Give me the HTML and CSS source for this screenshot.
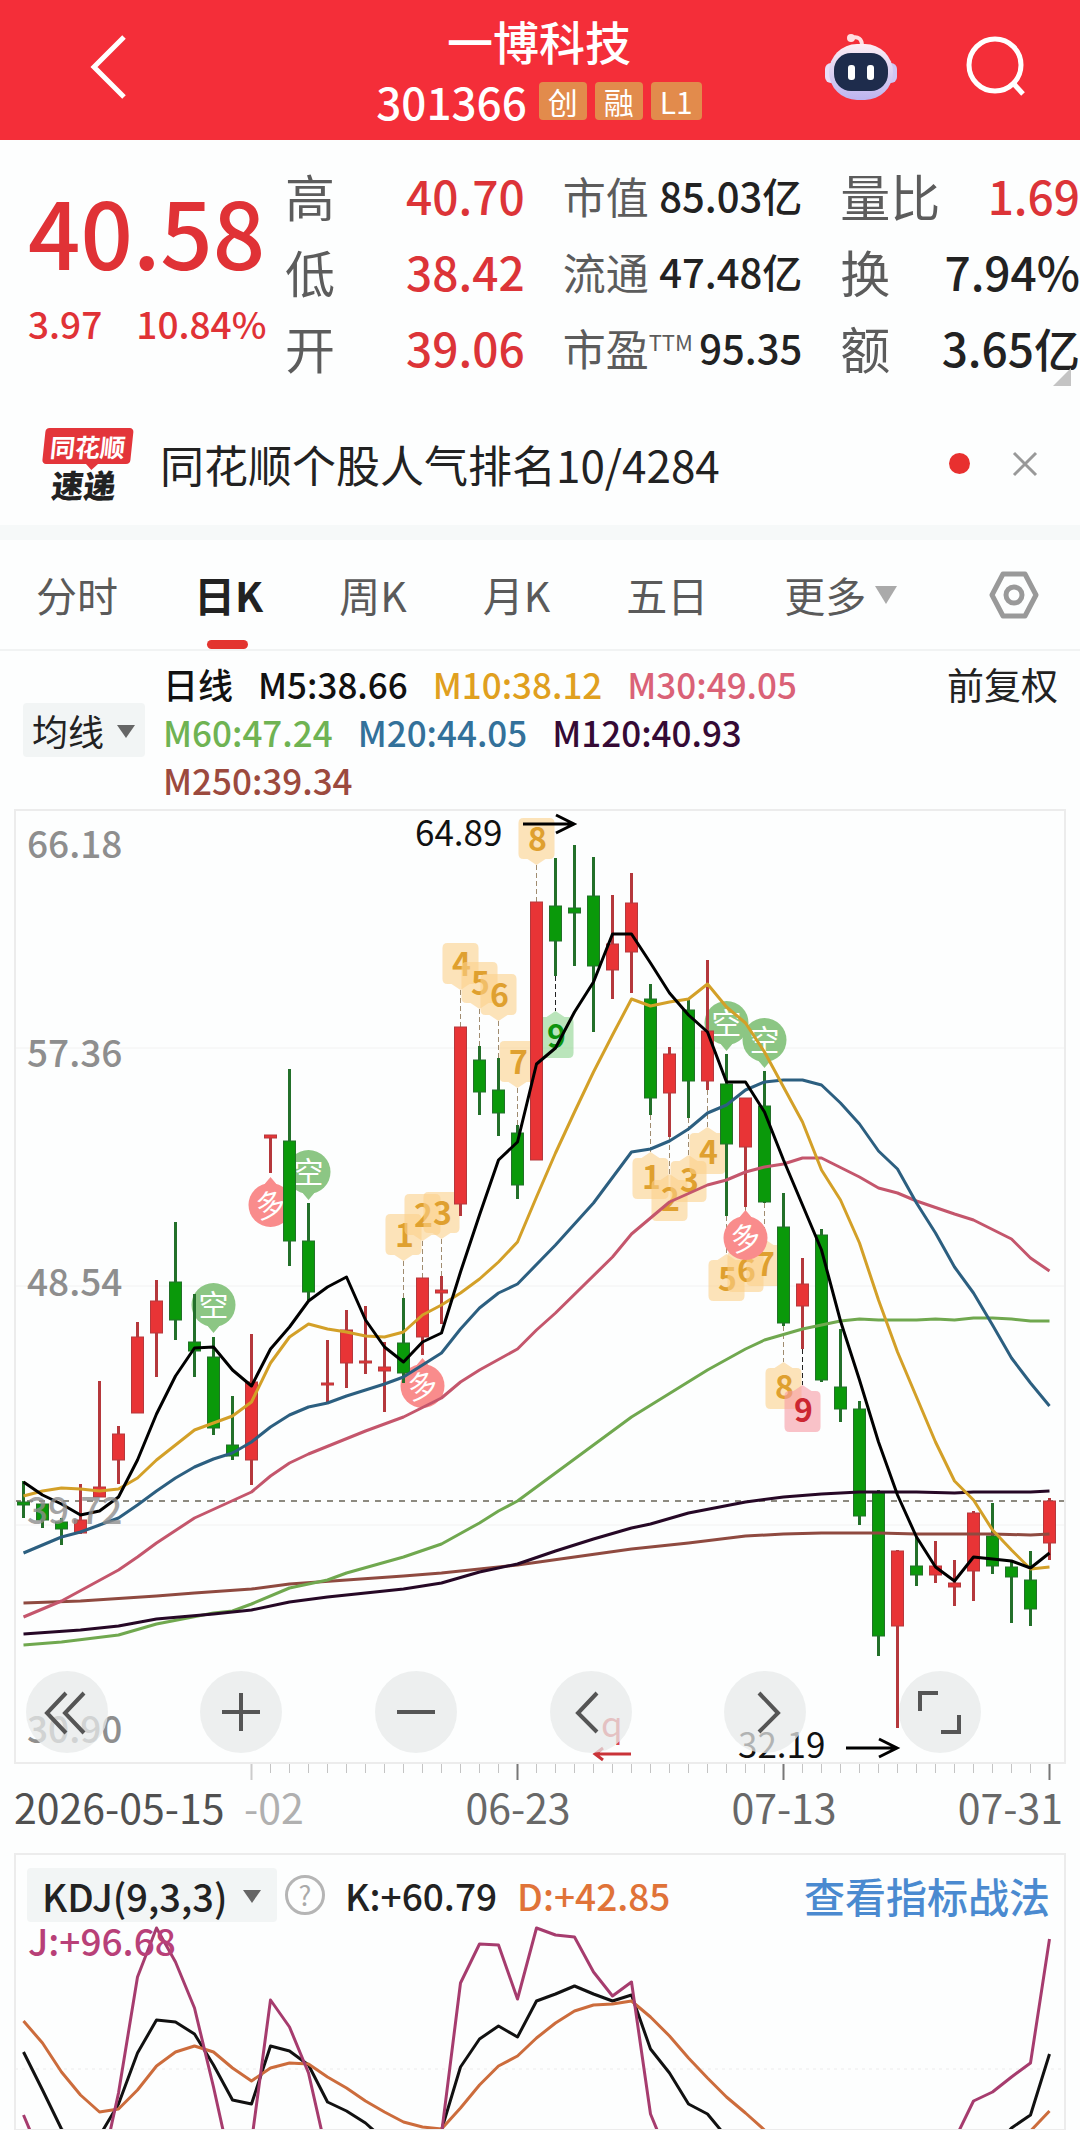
FILE: index.html
```html
<!DOCTYPE html>
<html lang="zh-CN">
<head>
    <meta charset="utf-8" />
    <meta name="viewport" content="width=device-width, initial-scale=1" />
    <title>一博科技 301366</title>
    <link rel="stylesheet" href="styles.css">
    <script src="chart.js" defer></script>
</head>
<body>
    <header class="topbar">
        <button class="iconbtn back" aria-label="返回">
            <svg width="40" height="66" viewBox="0 0 40 66"><path d="M36 3 L6 33 L36 63" /></svg>
        </button>
        <div class="stock">
            <h1>一博科技</h1>
            <div class="code">
                <span>301366</span>
                <span class="badge">创</span>
                <span class="badge">融</span>
                <span class="badge">L1</span>
            </div>
        </div>
        <button class="iconbtn robot" aria-label="助手">
            <svg width="74" height="70" viewBox="0 0 74 70">
                <defs>
                    <linearGradient id="shell" x1="0" y1="0" x2="0" y2="1">
                        <stop offset="0" stop-color="#fdeef4" />
                        <stop offset="1" stop-color="#bcb4f0" />
                    </linearGradient>
                </defs>
                <path class="antenna" d="M27 6 Q38 3 38 14" />
                <circle cx="27" cy="6" r="4" fill="#ffdfe2" />
                <rect x="1" y="31" width="14" height="20" rx="6" fill="#e9def8" />
                <rect x="59" y="31" width="14" height="20" rx="6" fill="#cfc6f3" />
                <rect x="5" y="12" width="64" height="56" rx="28" fill="url(#shell)" />
                <rect x="10" y="21" width="54" height="38" rx="17" fill="#1e2c4c" />
                <rect x="24" y="33" width="7" height="15" rx="3" fill="#fff" />
                <rect x="43" y="33" width="7" height="15" rx="3" fill="#fff" />
            </svg>
        </button>
        <button class="iconbtn search" aria-label="搜索">
            <svg width="64" height="64" viewBox="0 0 64 64"><circle cx="31" cy="30" r="26" /><path d="M49 48 L59 59" /></svg>
        </button>
    </header>

    <section class="quote">
        <div class="price">
            <div class="last">40.58</div>
            <div class="change"><span>3.97</span><span>10.84%</span></div>
        </div>
        <dl class="stats">
            <div><dt>高</dt><dd class="up">40.70</dd></div>
            <div class="small"><dt>市值</dt><dd>85.03亿</dd></div>
            <div><dt>量比</dt><dd class="up">1.69</dd></div>
            <div><dt>低</dt><dd class="up">38.42</dd></div>
            <div class="small"><dt>流通</dt><dd>47.48亿</dd></div>
            <div><dt>换</dt><dd>7.94%</dd></div>
            <div><dt>开</dt><dd class="up">39.06</dd></div>
            <div class="small"><dt>市盈<sup>TTM</sup></dt><dd>95.35</dd></div>
            <div><dt>额</dt><dd>3.65亿</dd></div>
        </dl>
        <span class="corner"></span>
    </section>

    <section class="notice">
        <div class="brand"><b>同花顺</b><i>速递</i></div>
        <a href="#">同花顺个股人气排名10/4284</a>
        <span class="dot"></span>
        <button class="close" aria-label="关闭">
            <svg width="26" height="26" viewBox="0 0 26 26"><path d="M2 2 L24 24 M24 2 L2 24" /></svg>
        </button>
    </section>

    <nav class="tabs">
        <button>分时</button>
        <button class="active">日K</button>
        <button>周K</button>
        <button>月K</button>
        <button>五日</button>
        <button class="more">更多</button>
        <button class="setting" aria-label="设置">
            <svg width="50" height="48" viewBox="0 0 50 48"><path d="M14 3 H36 L47 24 L36 45 H14 L3 24 Z" /><circle cx="25" cy="24" r="8" /></svg>
        </button>
    </nav>

    <section class="legend">
        <div class="picker">
            <select aria-label="均线">
                <option>均线</option>
            </select>
        </div>
        <div class="averages">
            <span class="day">日线</span>
            <span class="m5">M5:38.66</span>
            <span class="m10">M10:38.12</span>
            <span class="m30">M30:49.05</span>
            <span class="m60">M60:47.24</span>
            <span class="m20">M20:44.05</span>
            <span class="m120">M120:40.93</span>
            <span class="m250">M250:39.34</span>
        </div>
        <button class="adjust">前复权</button>
    </section>

    <section class="kline">
        <svg id="kchart" viewBox="15 810 1050 953"></svg>
        <div class="controls">
            <button aria-label="最早"><svg viewBox="0 0 82 82"><path d="M40 22 L21 42 L40 62 M58 22 L39 42 L58 62" /></svg></button>
            <button aria-label="放大"><svg viewBox="0 0 82 82"><path d="M41 22 V60 M22 41 H60" /></svg></button>
            <button aria-label="缩小"><svg viewBox="0 0 82 82"><path d="M22 41 H60" /></svg></button>
            <button aria-label="向前"><svg viewBox="0 0 82 82"><path d="M47 22 L28 42 L47 61" /></svg></button>
            <button aria-label="向后"><svg viewBox="0 0 82 82"><path d="M35 22 L54 42 L35 61" /></svg></button>
            <button aria-label="全屏"><svg viewBox="0 0 82 82"><path d="M21 40 V22 H39 M60 44 V61 H42" /></svg></button>
        </div>
    </section>
    <svg id="timeaxis" viewBox="0 0 1080 91"></svg>

    <section class="kdj">
        <div class="kdjhead">
            <div class="picker">
                <select aria-label="指标">
                    <option>KDJ(9,3,3)</option>
                </select>
            </div>
            <button class="help" aria-label="说明">?</button>
            <span class="k">K:+60.79</span>
            <span class="d">D:+42.85</span>
            <a href="#">查看指标战法</a>
        </div>
        <div class="j">J:+96.68</div>
        <svg id="kdjchart" viewBox="15 1854 1050 276"></svg>
    </section>
</body>
</html>
```
FILE: styles.css
```css
*{
    padding:0;
    margin:0;
    box-sizing:border-box;
}
body{
    font-family:"Noto Sans CJK SC", "Roboto", sans-serif;
    background-color:#fdfefe;
    color:#222;
    overflow-x:hidden;
}
button, select{
    font-family:inherit;
    border:none;
    background:none;
    color:inherit;
}
a{
    text-decoration:none;
    color:inherit;
}
svg{
    display:block;
    fill:none;
}

/* top bar */
.topbar{
    display:flex;
    align-items:center;
    height:140px;
    padding:0 52px 6px 88px;
    background-color:#f42e39;
    color:#fff;
}
.iconbtn svg{
    stroke:#fff;
    stroke-width:5;
}
.robot{
    margin-right:66px;
}
.robot svg{
    stroke:none;
}
.robot .antenna{
    stroke:#ffdfe2;
    stroke-width:4;
}
.stock{
    flex-grow:1;
    margin-left:126px;
    padding-top:2px;
    text-align:center;
}
.stock h1{
    font-size:46px;
    font-weight:500;
    line-height:66px;
}
.code{
    display:flex;
    justify-content:center;
    align-items:center;
    gap:8px;
    font-size:44px;
    font-weight:500;
    line-height:56px;
}
.code span:first-child{
    margin-right:4px;
}
.badge{
    padding:0 9px;
    border-radius:4px;
    background-color:#e28b4c;
    font-size:30px;
    font-weight:400;
    line-height:38px;
}

/* quote */
.quote{
    position:relative;
    display:flex;
    padding:17px 0 1px 28px;
}
.price{
    flex:0 0 257px;
    color:#e03236;
    white-space:nowrap;
}
.last{
    font-size:92px;
    font-weight:500;
    line-height:120px;
    padding-top:13px;
}
.change{
    display:flex;
    gap:34px;
    padding-top:3px;
    font-size:37px;
    font-weight:500;
    line-height:60px;
}
.stats{
    flex-grow:1;
    display:grid;
    grid-template-columns:repeat(3, 1fr);
    column-gap:38px;
}
.stats div{
    display:flex;
    justify-content:space-between;
    line-height:76px;
    font-size:46px;
    white-space:nowrap;
}
.stats dt{
    color:#5c5c5c;
    font-size:50px;
}
.stats dd{
    font-weight:500;
}
.stats .small{
    font-size:40px;
}
.stats .small dt{
    font-size:43px;
}
.stats sup{
    font-size:22px;
    line-height:0;
    vertical-align:15px;
}
.stats .up{
    color:#dc3438;
}
.corner{
    position:absolute;
    right:9px;
    bottom:0;
    border-left:18px solid transparent;
    border-bottom:18px solid #c4c4c4;
}

/* notice */
.notice{
    display:flex;
    align-items:center;
    height:154px;
    padding:16px 42px 0;
    border-bottom:15px solid #f6f9f9;
}
.brand{
    width:88px;
    margin-right:30px;
    text-align:center;
    line-height:36px;
    transform:skewX(-6deg);
}
.brand b{
    position:relative;
    display:block;
    margin-bottom:4px;
    border-radius:4px;
    background-color:#e3353a;
    color:#fff;
    font-size:25px;
}
.brand b::after{
    content:"";
    position:absolute;
    left:50%;
    top:100%;
    border:6px solid transparent;
    border-top-color:#e3353a;
    border-bottom:0;
}
.brand i{
    display:block;
    font-size:32px;
    font-style:normal;
    font-weight:900;
    line-height:32px;
}
.notice a{
    flex-grow:1;
    font-size:44px;
}
.dot{
    width:21px;
    height:21px;
    border-radius:50%;
    background-color:#e8302f;
}
.close{
    margin-left:42px;
}
.close svg{
    stroke:#999;
    stroke-width:3;
}

/* tabs */
.tabs{
    display:flex;
    align-items:center;
    gap:76px;
    height:111px;
    padding:0 41px 0 36px;
    border-bottom:2px solid #f1f3f3;
}
.tabs button{
    position:relative;
    font-size:41px;
    line-height:109px;
    color:#5a5a5a;
    white-space:nowrap;
}
.tabs .active{
    color:#222;
    font-weight:700;
}
.tabs .active::after{
    content:"";
    position:absolute;
    left:13px;
    bottom:0;
    width:41px;
    height:9px;
    border-radius:5px;
    background-color:#e3342f;
}
.tabs .more{
    display:flex;
    align-items:center;
    gap:9px;
}
.tabs .more::after{
    content:"";
    border:11px solid transparent;
    border-top:18px solid #aaa;
    border-bottom:0;
}
.tabs .setting{
    margin-left:auto;
}
.setting svg{
    stroke:#999;
    stroke-width:5;
    stroke-linejoin:round;
}

/* moving averages */
.legend{
    display:flex;
    padding:9px 22px 0 23px;
    height:159px;
    font-size:35px;
    line-height:48px;
}
.picker{
    position:relative;
    align-self:center;
    background-color:#f2f5f5;
    border-radius:4px;
}
.legend .picker{
    margin-bottom:10px;
}
.picker::after{
    content:"";
    position:absolute;
    right:10px;
    top:22px;
    border:9px solid transparent;
    border-top:13px solid #666;
    border-bottom:0;
    pointer-events:none;
}
.picker select{
    appearance:none;
    display:block;
    height:54px;
    padding:0 40px 0 9px;
    font-size:36px;
    color:#222;
}
.averages{
    flex:1;
    display:flex;
    flex-wrap:wrap;
    align-content:flex-start;
    column-gap:25px;
    padding-left:18px;
    font-weight:500;
}
.day, .m5{
    color:#111;
}
.m10{
    color:#e0a01f;
}
.m30{
    color:#da6277;
}
.m60{
    color:#6fb353;
}
.m20{
    color:#33719a;
}
.m120{
    color:#350a35;
}
.m250{
    color:#9c4a3e;
}
.adjust{
    align-self:flex-start;
    font-size:37px;
    line-height:48px;
}

/* candle chart */
.kline{
    position:relative;
    margin:0 15px;
    outline:2px solid #ececec;
    outline-offset:-1px;
}
#kchart, #kdjchart, #timeaxis{
    width:100%;
    height:auto;
}
.controls{
    position:absolute;
    left:1%;
    right:8%;
    bottom:10px;
    display:flex;
    justify-content:space-between;
}
.controls button{
    width:82px;
    height:82px;
    border-radius:50%;
    background-color:rgba(231, 233, 233, 0.75);
}
.controls svg{
    stroke:#555;
    stroke-width:4;
}
.ma{
    stroke-width:3;
    stroke-linejoin:round;
}
.scale{
    fill:#8e8e8e;
    font-size:37px;
    font-weight:500;
}
.note{
    fill:#111;
    font-size:35px;
}
.date{
    fill:#686868;
    font-size:41px;
}
.date.first{
    fill:#505050;
}
.date.faded{
    fill:#b0b0b0;
}
.tagtext{
    font-size:32px;
    font-weight:700;
    text-anchor:middle;
}
.pintext{
    fill:#fff;
    font-size:30px;
    text-anchor:middle;
}

/* kdj */
.kdj{
    position:relative;
    margin:0 15px;
    outline:2px solid #ececec;
    outline-offset:-1px;
}
.kdjhead{
    position:absolute;
    left:12px;
    right:15px;
    top:14px;
    display:flex;
    align-items:center;
    font-size:37px;
    font-weight:500;
    line-height:54px;
}
.kdjhead select{
    padding:0 49px 0 15px;
    font-size:38px;
    font-weight:500;
}
.kdjhead .picker::after{
    right:16px;
}
.help{
    width:40px;
    height:40px;
    margin:0 20px 0 8px;
    border:3px solid #b5b5b5;
    border-radius:50%;
    font-size:27px;
    line-height:34px;
    color:#aaa;
}
.k{
    margin-right:20px;
}
.d{
    color:#e07338;
}
.kdjhead a{
    margin-left:auto;
    font-size:41px;
    color:#4a8ad0;
}
.j{
    position:absolute;
    left:13px;
    top:59px;
    font-size:37px;
    font-weight:500;
    line-height:54px;
    color:#b84078;
}
```
FILE: chart.js
```js
// one bar every 19 units, first one at 23.5
function xAt(i) {
    return 23.5 + i * 19;
}

// [colour, high, body top, body bottom, low]
var candles = [
    ['g', 1481, 1502, 1505, 1518], ['g', 1504, 1504, 1520, 1528], ['g', 1518, 1522, 1529, 1545],
    ['r', 1484, 1520, 1533, 1534], ['r', 1381, 1487, 1497, 1497], ['r', 1426, 1434, 1460, 1484],
    ['r', 1322, 1337, 1413, 1413], ['r', 1280, 1301, 1333, 1377], ['g', 1222, 1282, 1320, 1340],
    ['g', 1294, 1342, 1351, 1377], ['g', 1337, 1357, 1428, 1435], ['g', 1396, 1445, 1456, 1460],
    ['r', 1334, 1382, 1460, 1485], ['r', 1135, 1135, 1138, 1173], ['g', 1069, 1141, 1241, 1266],
    ['g', 1203, 1241, 1292, 1300], ['r', 1340, 1383, 1385, 1404], ['r', 1310, 1330, 1363, 1388],
    ['r', 1306, 1361, 1363, 1374], ['r', 1342, 1367, 1371, 1412], ['g', 1298, 1343, 1373, 1383],
    ['r', 1278, 1278, 1337, 1355], ['r', 1276, 1290, 1293, 1324], ['r', 1027, 1027, 1204, 1216],
    ['g', 1046, 1060, 1092, 1115], ['g', 1058, 1090, 1113, 1136], ['g', 1125, 1133, 1185, 1199],
    ['r', 902, 902, 1160, 1160], ['g', 858, 906, 941, 976], ['g', 845, 908, 913, 966],
    ['g', 857, 896, 966, 1032], ['r', 895, 944, 970, 999], ['r', 873, 903, 952, 993],
    ['g', 984, 999, 1098, 1115], ['r', 1047, 1054, 1093, 1137], ['g', 998, 1010, 1081, 1118],
    ['r', 960, 1031, 1081, 1090], ['g', 1054, 1084, 1144, 1216], ['r', 1098, 1098, 1147, 1207],
    ['g', 1071, 1106, 1202, 1203], ['g', 1193, 1227, 1323, 1326], ['r', 1258, 1284, 1306, 1349],
    ['g', 1229, 1235, 1380, 1382], ['g', 1329, 1387, 1409, 1422], ['g', 1401, 1409, 1516, 1525],
    ['g', 1490, 1493, 1636, 1656], ['r', 1550, 1551, 1626, 1728], ['g', 1537, 1566, 1575, 1586],
    ['r', 1541, 1566, 1575, 1583], ['r', 1560, 1583, 1587, 1606], ['r', 1511, 1513, 1571, 1601],
    ['g', 1503, 1536, 1566, 1574], ['g', 1560, 1567, 1577, 1623], ['g', 1551, 1580, 1609, 1626],
    ['r', 1498, 1501, 1543, 1560]
];

// moving averages, [bar, y] pairs
var averages = [
    { color: '#8f4a40', points: [0,1603, 3,1601, 7,1596, 9,1593, 12,1589, 14,1584, 17,1580, 20,1576, 22,1573, 24,1569, 26,1565, 29,1557, 32,1549, 35,1543, 38,1536, 40,1534, 42,1533, 45,1533, 47,1534, 51,1534, 53,1535, 54,1534] },
    { color: '#70a84f', points: [0,1645, 2,1642, 5,1635, 7,1624, 10,1613, 11,1611, 12,1604, 14,1588, 16,1580, 17,1573, 20,1557, 22,1544, 24,1523, 25,1511, 26,1501, 27,1487, 32,1417, 36,1370, 38,1349, 39,1340, 41,1329, 43,1321, 44,1319, 45,1320, 47,1320, 48,1319, 49,1320, 50,1318, 51,1318, 52,1319, 53,1321, 54,1321] },
    { color: '#260826', points: [0,1634, 3,1630, 5,1626, 7,1619, 10,1614, 12,1610, 14,1602, 16,1597, 20,1589, 22,1583, 24,1572, 26,1564, 28,1551, 30,1539, 32,1528, 33,1524, 35,1513, 38,1502, 40,1497, 42,1494, 44,1492, 47,1492, 49,1493, 50,1492, 53,1492, 54,1491] },
    { color: '#c4566c', points: [0,1617, 2,1601, 5,1570, 6,1557, 7,1543, 9,1518, 12,1492, 13,1476, 14,1463, 15,1454, 18,1431, 20,1417, 22,1398, 23,1382, 24,1370, 26,1349, 27,1330, 28,1313, 31,1257, 32,1234, 34,1202, 36,1185, 37,1180, 38,1172, 39,1167, 40,1164, 41,1158, 42,1158, 44,1177, 45,1188, 46,1193, 47,1201, 49,1214, 50,1220, 52,1239, 53,1258, 54,1271] },
    { color: '#2c5f80', points: [0,1553, 1,1545, 2,1537, 3,1532, 4,1525, 5,1518, 6,1505, 7,1491, 8,1478, 9,1467, 10,1459, 11,1453, 12,1442, 13,1427, 14,1415, 15,1407, 16,1403, 17,1396, 18,1390, 19,1384, 20,1377, 21,1365, 22,1353, 23,1329, 24,1308, 25,1293, 26,1284, 28,1245, 30,1203, 32,1152, 33,1149, 34,1141, 35,1129, 36,1113, 37,1105, 38,1090, 39,1082, 40,1080, 41,1080, 42,1085, 43,1103, 44,1124, 45,1151, 46,1169, 47,1203, 48,1233, 49,1267, 50,1293, 51,1325, 52,1358, 53,1383, 54,1406] },
    { color: '#d3a028', points: [0,1496, 1,1491, 2,1488, 3,1489, 4,1491, 5,1489, 6,1478, 7,1460, 8,1445, 9,1430, 10,1423, 11,1416, 12,1402, 13,1363, 14,1337, 15,1324, 16,1329, 17,1332, 18,1336, 19,1337, 20,1332, 21,1315, 22,1305, 23,1293, 24,1279, 25,1262, 26,1242, 27,1197, 28,1153, 29,1112, 30,1072, 31,1035, 32,999, 33,1006, 34,1002, 35,999, 36,984, 37,1007, 38,1023, 39,1052, 40,1087, 41,1122, 42,1170, 43,1200, 44,1243, 45,1300, 46,1352, 47,1397, 48,1442, 49,1481, 50,1500, 51,1530, 52,1550, 53,1569, 54,1567] },
    { color: '#000', points: [0,1482, 1,1495, 2,1504, 3,1515, 4,1511, 5,1497, 6,1460, 7,1414, 8,1376, 9,1348, 10,1347, 11,1370, 12,1386, 13,1349, 14,1327, 15,1301, 16,1287, 17,1277, 18,1320, 19,1347, 20,1362, 21,1342, 22,1333, 23,1272, 24,1215, 25,1160, 26,1142, 27,1064, 28,1048, 29,1012, 30,982, 31,934, 32,934, 33,963, 34,993, 35,1015, 36,1032, 37,1082, 38,1082, 39,1112, 40,1160, 41,1205, 42,1250, 43,1321, 44,1380, 45,1442, 46,1495, 47,1537, 48,1567, 49,1581, 50,1557, 51,1559, 52,1561, 53,1568, 54,1553] }
];

var kdj = [
    { color: '#111', points: [0,2052, 1,2090, 2,2129, 3,2150, 4,2136, 5,2104, 6,2053, 7,2020, 8,2022, 9,2034, 10,2065, 11,2100, 12,2104, 13,2046, 14,2051, 15,2065, 16,2102, 17,2111, 18,2123, 19,2140, 21,2150, 22,2130, 23,2067, 24,2039, 25,2026, 26,2037, 27,2001, 28,1994, 29,1986, 30,1994, 31,2001, 32,1995, 33,2049, 34,2073, 35,2104, 36,2114, 37,2137, 38,2160, 51,2150, 52,2128, 53,2115, 54,2054] },
    { color: '#cc6c3c', points: [0,2021, 1,2043, 2,2072, 3,2095, 4,2112, 5,2109, 6,2090, 7,2066, 8,2052, 9,2046, 10,2052, 11,2068, 12,2081, 13,2068, 14,2063, 15,2064, 16,2077, 17,2088, 18,2101, 19,2112, 20,2122, 21,2127, 22,2129, 23,2108, 24,2085, 25,2066, 26,2056, 27,2038, 28,2023, 29,2011, 30,2005, 31,2004, 32,2001, 33,2017, 34,2036, 35,2058, 36,2078, 37,2097, 38,2113, 39,2130, 40,2150, 52,2150, 53,2131, 54,2111] },
    { color: '#a63c6e', points: [0,2115, 1,2160, 4,2180, 5,2093, 6,1977, 7,1928, 8,1962, 9,2008, 10,2087, 11,2173, 12,2142, 13,2000, 14,2027, 15,2073, 16,2157, 21,2180, 22,2134, 23,1983, 24,1944, 25,1945, 26,1999, 27,1928, 28,1935, 29,1937, 30,1972, 31,1996, 32,1982, 33,2114, 34,2160, 48,2180, 49,2140, 50,2101, 51,2092, 52,2077, 53,2063, 54,1939] }
];

// [text, bar, tip y, direction of the tip, kind]
var tags = [
    ['1', 20, 1261, 'down'], ['2', 21, 1241, 'down'], ['3', 22, 1239, 'down'], ['4', 23, 990, 'down'],
    ['5', 24, 1009, 'down'], ['6', 25, 1021, 'down'], ['7', 26, 1088, 'down'], ['8', 27, 865, 'down'],
    ['9', 28, 1011, 'up', 'green'],
    ['1', 33, 1152, 'up'], ['2', 34, 1174, 'up'], ['3', 35, 1155, 'up'], ['4', 36, 1127, 'up'],
    ['5', 37, 1254, 'up'], ['6', 38, 1245, 'up'], ['7', 39, 1239, 'up'], ['8', 40, 1362, 'up'],
    ['9', 41, 1385, 'up', 'red']
];
var pins = [
    ['空', 10, 1333, 'down'], ['空', 15, 1200, 'down'], ['空', 37, 1051, 'down'], ['空', 39, 1068, 'down'],
    ['多', 13, 1177, 'up'], ['多', 21, 1358, 'up'], ['多', 38, 1210, 'up']
];
var tagColors = {
    yellow: ['#fbd08a', '#dfa02f'],
    green: ['#8ed48e', '#0d930d'],
    red: ['#f79aa4', '#cc2631']
};

function line(x1, y1, x2, y2, color, width, extra) {
    return '<line x1="' + x1 + '" y1="' + y1 + '" x2="' + x2 + '" y2="' + y2 +
        '" stroke="' + color + '" stroke-width="' + width + '" ' + (extra || '') + '/>';
}

function text(x, y, str, cls, extra) {
    return '<text x="' + x + '" y="' + y + '" class="' + cls + '" ' + (extra || '') + '>' + str + '</text>';
}

function polyline(item) {
    var pts = [];
    for (var n = 0; n < item.points.length; n += 2) {
        pts.push(xAt(item.points[n]) + ',' + item.points[n + 1]);
    }
    return '<polyline class="ma" stroke="' + item.color + '" points="' + pts.join(' ') + '"/>';
}

function drawTag(t) {
    var x = xAt(t[1]), tip = t[2], s = t[3] == 'up' ? 1 : -1;
    var c = tagColors[t[4] || 'yellow'];
    var bar = candles[t[1]];
    var out = line(x, s > 0 ? bar[4] : bar[1], x, tip, t[4] ? '#222' : '#a08c70', 1, 'stroke-dasharray="5 3"');
    // box with a small roof on the side of the candle
    out += '<path fill="' + c[0] + '" fill-opacity="0.6" d="M' + x + ' ' + tip + ' l9 ' + 6 * s + ' h4 q5 0 5 ' + 5 * s +
        ' v' + 31 * s + ' q0 ' + 5 * s + ' -5 ' + 5 * s + ' h-26 q-5 0 -5 ' + -5 * s + ' v' + -31 * s +
        ' q0 ' + -5 * s + ' 5 ' + -5 * s + ' h4 z"/>';
    out += text(x + 1, s > 0 ? tip + 37 : tip - 14, t[0], 'tagtext', 'fill="' + c[1] + '"');
    return out;
}

function drawPin(p) {
    var x = xAt(p[1]), s = p[3] == 'up' ? 1 : -1;
    var cy = p[2] + 28 * s;
    var color = p[3] == 'up' ? '#f98c8c' : '#8cc684';
    return '<path fill="' + color + '" d="M' + x + ' ' + p[2] + ' l10 ' + 12 * s + ' h-20 z"/>' +
        '<circle cx="' + x + '" cy="' + cy + '" r="22" fill="' + color + '"/>' +
        text(x, cy + 11, p[0], 'pintext', p[3] == 'up' ? 'transform="rotate(-14 ' + x + ' ' + cy + ')"' : '');
}

function drawCandle(c, i) {
    var x = xAt(i);
    var fill = c[0] == 'r' ? '#e83436' : '#0a990a';
    var wick = c[0] == 'r' ? '#b5383c' : '#23702a';
    return line(x, c[1], x, c[4], wick, 3) +
        '<rect x="' + (x - 6) + '" y="' + c[2] + '" width="12" height="' + (c[3] - c[2]) +
        '" fill="' + fill + '" stroke="' + wick + '"/>';
}

function drawKline() {
    var out = '';
    [1048, 1286, 1525].forEach(function (y) {
        out += line(15, y, 1065, y, '#f2f2f2', 1);
    });
    out += line(15, 1501, 1065, 1501, '#8d8a80', 2, 'stroke-dasharray="6 6"');
    out += tags.map(drawTag).join('');
    out += pins.map(drawPin).join('');
    out += candles.map(drawCandle).join('');
    out += averages.map(polyline).join('');

    // price scale
    out += text(27, 858, '66.18', 'scale') + text(27, 1067, '57.36', 'scale') +
        text(27, 1296, '48.54', 'scale') + text(27, 1524, '39.72', 'scale', 'opacity="0.8"') +
        text(27, 1743, '30.90', 'scale');

    // highest and lowest
    out += text(415, 846, '64.89', 'note');
    out += '<path stroke="#000" stroke-width="3" d="M523 824 H574 M556 815 L574 824 L556 833"/>';
    out += text(738, 1758, '32.19', 'note');
    out += '<path stroke="#000" stroke-width="3" d="M846 1748 H897 M879 1739 L897 1748 L879 1757"/>';
    out += text(601, 1737, 'q', 'note', 'style="fill:#d9484c"');
    out += '<path stroke="#c93338" stroke-width="3" d="M631 1754 H595 M603 1748 L595 1754 L603 1760"/>';
    document.getElementById('kchart').innerHTML = out;
}

function drawAxis() {
    var out = '';
    for (var i = 12; i < 55; i++) {
        if (i % 14 == 12) {
            out += line(xAt(i), 1, xAt(i), 17, i == 12 ? '#ccc' : '#777', 2);
        } else {
            out += line(xAt(i), 1, xAt(i), 10, '#c4c4c4', 1);
        }
    }
    out += text(14, 61, '2026-05-15', 'date first') + text(244, 61, '-02', 'date faded') +
        text(518, 61, '06-23', 'date', 'text-anchor="middle"') +
        text(784, 61, '07-13', 'date', 'text-anchor="middle"') +
        text(1063, 61, '07-31', 'date', 'text-anchor="end"');
    document.getElementById('timeaxis').innerHTML = out;
}

function drawKdj() {
    document.getElementById('kdjchart').innerHTML =
        line(15, 2069, 1065, 2069, '#ececec', 1, 'stroke-dasharray="3 4"') + kdj.map(polyline).join('');
}

drawKline();
drawAxis();
drawKdj();
```
